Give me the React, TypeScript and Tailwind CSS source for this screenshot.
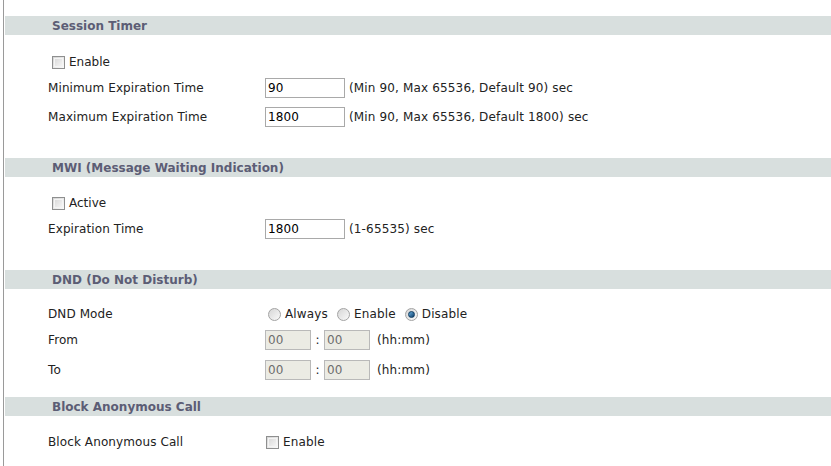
import React from 'react'

// ── Bits ──────────────────────────────────────────────────────

const font = "font-['Tahoma','DejaVu_Sans',sans-serif]"

function SectionBar({ title, className = '' }: { title: string; className?: string }) {
  return (
    <div className={`h-[19px] bg-[#d8dfde] flex items-center pl-[47px] ${className}`}>
      <span className="text-[12px] font-bold text-[#5c5d75] leading-none">{title}</span>
    </div>
  )
}

function Checkbox({ checked = false }: { checked?: boolean }) {
  return (
    <span className="inline-block w-[13px] h-[13px] border border-[#8e8f8f] bg-gradient-to-br from-[#d4d4d4] to-[#fbfbfb] shrink-0 relative">
      <span className="absolute inset-[1px] border border-[#f4f4f4]" />
      {checked && <span className="absolute inset-[3px] bg-[#333]" />}
    </span>
  )
}

function Radio({ checked = false }: { checked?: boolean }) {
  return (
    <span className="inline-flex items-center justify-center w-[13px] h-[13px] rounded-full border border-[#a3a3a3] bg-gradient-to-br from-[#d6d6d6] to-[#fafafa] shrink-0">
      {checked && <span className="w-[7px] h-[7px] rounded-full bg-gradient-to-br from-[#6bb0e0] to-[#0c3f6a] border border-[#0d3b60]" />}
    </span>
  )
}

function TextBox({ value, w = 'w-[80px]', disabled }: { value: string; w?: string; disabled?: boolean }) {
  return (
    <span className={`inline-flex items-center h-[20px] ${w} border border-[#a9a9a9] px-[2px] text-[12px] ${disabled ? 'bg-[#ebebe4] text-[#6d6d6d] border-[#b9b9b9]' : 'bg-white text-black'}`}>
      {value}
    </span>
  )
}

function Row({ label, children, className = '' }: { label: string; children: React.ReactNode; className?: string }) {
  return (
    <div className={`flex items-center h-[22px] ${className}`}>
      <div className="w-[260px] pl-[43px] text-[12px] text-[#222] tracking-[0.1px]">{label}</div>
      <div className="flex items-center text-[12px] text-[#222] tracking-[0.15px]">{children}</div>
    </div>
  )
}

// ── Page ──────────────────────────────────────────────────────

export default function App() {
  return (
    <div className={`w-[831px] h-[466px] bg-white overflow-hidden ${font}`}>
      <div className="ml-[3px] h-full border-l border-[#9a9a9a] pl-[1px] pt-[16px]">

        <SectionBar title="Session Timer" />
        <div className="flex items-center gap-[4px] h-[20px] mt-[17px] pl-[47px] text-[12px] text-[#222]">
          <Checkbox /> Enable
        </div>
        <Row label="Minimum Expiration Time" className="mt-[5px]">
          <TextBox value="90" />
          <span className="ml-[4px]">(Min 90, Max 65536, Default 90) sec</span>
        </Row>
        <Row label="Maximum Expiration Time" className="mt-[7px]">
          <TextBox value="1800" />
          <span className="ml-[4px]">(Min 90, Max 65536, Default 1800) sec</span>
        </Row>

        <SectionBar title="MWI (Message Waiting Indication)" className="mt-[30px]" />
        <div className="flex items-center gap-[4px] h-[20px] mt-[16px] pl-[47px] text-[12px] text-[#222]">
          <Checkbox /> Active
        </div>
        <Row label="Expiration Time" className="mt-[5px]">
          <TextBox value="1800" />
          <span className="ml-[4px]">(1-65535) sec</span>
        </Row>

        <SectionBar title="DND (Do Not Disturb)" className="mt-[30px]" />
        <Row label="DND Mode" className="mt-[14px]">
          <span className="ml-[3px] flex items-center gap-[4px]"><Radio /> Always</span>
          <span className="ml-[9px] flex items-center gap-[4px]"><Radio /> Enable</span>
          <span className="ml-[9px] flex items-center gap-[4px]"><Radio checked /> Disable</span>
        </Row>
        <Row label="From" className="mt-[4px]">
          <TextBox value="00" w="w-[46px]" disabled />
          <span className="w-[13px] text-center">:</span>
          <TextBox value="00" w="w-[46px]" disabled />
          <span className="ml-[7px]">(hh:mm)</span>
        </Row>
        <Row label="To" className="mt-[8px]">
          <TextBox value="00" w="w-[46px]" disabled />
          <span className="w-[13px] text-center">:</span>
          <TextBox value="00" w="w-[46px]" disabled />
          <span className="ml-[7px]">(hh:mm)</span>
        </Row>

        <SectionBar title="Block Anonymous Call" className="mt-[16px]" />
        <Row label="Block Anonymous Call" className="mt-[15px]">
          <span className="ml-[1px] flex items-center gap-[4px]"><Checkbox /> Enable</span>
        </Row>

      </div>
    </div>
  )
}
